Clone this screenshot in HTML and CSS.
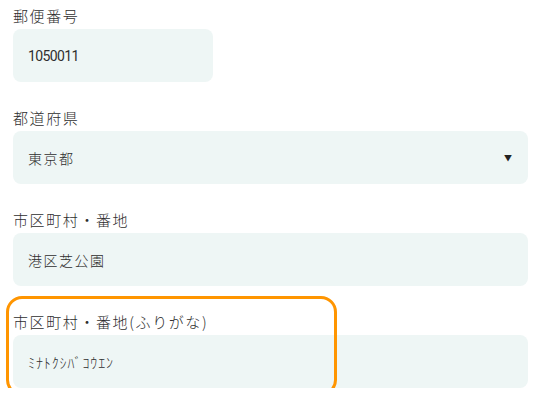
FILE: index.html
```html
<!DOCTYPE html>
<html lang="ja">
<head>
<meta charset="UTF-8">
<meta name="viewport" content="width=device-width, initial-scale=1.0">
<title>住所入力</title>
<link rel="stylesheet" href="styles.css">
</head>
<body>
  <form class="address-form">
    <div class="field">
      <label class="field-label" for="zip">郵便番号</label>
      <div class="field-box short">
        <span class="field-value num" id="zip">1050011</span>
      </div>
    </div>

    <div class="field">
      <label class="field-label" for="pref">都道府県</label>
      <div class="field-box select">
        <span class="field-value" id="pref">東京都</span>
        <span class="arrow">&#9660;</span>
      </div>
    </div>

    <div class="field">
      <label class="field-label" for="city">市区町村・番地</label>
      <div class="field-box">
        <span class="field-value" id="city">港区芝公園</span>
      </div>
    </div>

    <div class="field">
      <label class="field-label" for="kana">市区町村・番地(ふりがな)</label>
      <div class="field-box">
        <span class="field-value kana" id="kana">ﾐﾅﾄｸｼﾊﾞｺｳｴﾝ</span>
      </div>
      <!-- highlight around the label -->
      <div class="highlight"></div>
    </div>
  </form>
</body>
</html>
```

FILE: styles.css
```css
:root {
  --text: #2e2e2e;
  --field-bg: #eef6f5;
  --accent: #ff9500;
}

* {
  margin: 0;
  padding: 0;
  box-sizing: border-box;
}

body {
  font-family: 'Noto Sans CJK JP', 'Noto Sans', sans-serif;
  font-weight: 300;
  background: #ffffff;
  color: var(--text);
  overflow: hidden;
}

.address-form {
  display: flex;
  flex-direction: column;
  gap: 25px;
  padding: 5px 14px 0 13px;
}

.field {
  position: relative;
  display: flex;
  flex-direction: column;
  gap: 3px;
}

.field-label {
  font-size: 15px;
  line-height: 21px;
  letter-spacing: 1.6px;
  color: var(--text);
}

.field-box {
  display: flex;
  align-items: center;
  justify-content: space-between;
  height: 53px;
  padding: 0 15px;
  background: var(--field-bg);
  border-radius: 8px;
}

.field-box.short {
  width: 200px;
}

.field-value {
  font-size: 14px;
  letter-spacing: 1.5px;
  color: var(--text);
}

.field-value.num {
  font-family: Roboto, sans-serif;
  font-weight: 400;
  font-size: 14px;
  letter-spacing: -0.6px;
}

.field-value.kana {
  letter-spacing: 0.9px;
}

.arrow {
  font-size: 8px;
  color: #222222;
  padding-right: 1px;
}

.highlight {
  position: absolute;
  left: -7px;
  top: -15px;
  width: 331px;
  height: 100px;
  border: 3px solid var(--accent);
  border-radius: 16px;
  pointer-events: none;
}
```
